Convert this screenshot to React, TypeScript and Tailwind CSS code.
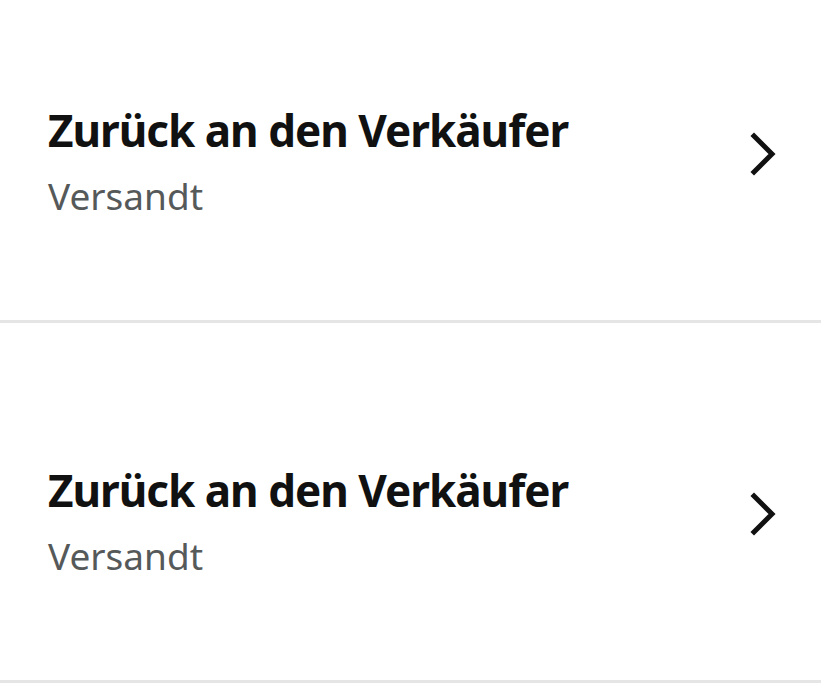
import React from 'react';

const items = [
  { title: 'Zurück an den Verkäufer', status: 'Versandt' },
  { title: 'Zurück an den Verkäufer', status: 'Versandt' },
];

const Chevron = () => (
  <svg width="28" height="44" viewBox="0 0 28 44" fill="none" className="shrink-0">
    <polyline points="5,4 23,22 5,40" stroke="#111111" strokeWidth="5" strokeLinecap="square" strokeLinejoin="miter" />
  </svg>
);

export default function App() {
  return (
    <div className="w-[821px] h-[698px] overflow-hidden bg-white" style={{ fontFamily: '"Noto Sans", "Open Sans", sans-serif' }}>
      {/* list is scrolled a bit, first row cut at the top */}
      <div className="-mt-[37px]">
        {items.map((item, idx) => (
          <div key={idx} className="h-[360px] flex items-start justify-between pl-12 pr-[44px] pt-[139px] border-b-[3px] border-[#e5e5e5]">
            <div>
              <h2 className="text-[44px] leading-[56px] font-bold text-[#111111] tracking-[-1px]">{item.title}</h2>
              <p className="mt-[14px] text-[37px] leading-[48px] text-[#565959]">{item.status}</p>
            </div>
            <div className="mt-[30px]">
              <Chevron />
            </div>
          </div>
        ))}
      </div>
    </div>
  );
}
